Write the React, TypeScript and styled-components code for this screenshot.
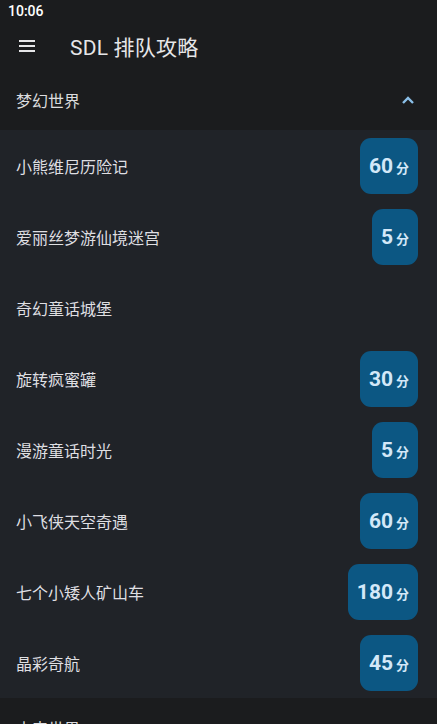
import styled, { createGlobalStyle } from "styled-components";
import { FC } from "react";

const GlobalStyle = createGlobalStyle`
  html, body {
    margin: 0;
    padding: 0;
    background: #1b1c1e;
  }
  body {
    font-family: Roboto, "Noto Sans CJK SC", sans-serif;
    color: #e2e2e4;
  }
`;

const Screen = styled.div`
  width: 437px;
  height: 724px;
  overflow: hidden;
  background: #1b1c1e;
  display: flex;
  flex-direction: column;

  & > * {
    flex-shrink: 0;
  }
`;

const StatusBar = styled.div`
  height: 22px;
  padding: 0 8px;
  display: flex;
  align-items: center;
  font-size: 14px;
  font-weight: 500;
  color: #ffffff;
`;

const AppBar = styled.header`
  height: 48px;
  display: flex;
  align-items: center;
  padding-left: 17px;
`;

const MenuIcon = styled.svg`
  width: 20px;
  height: 20px;
  margin-right: 33px;
`;

const Title = styled.h1`
  margin: 0;
  font-size: 21px;
  font-weight: 400;
  color: #e6e6e8;
  letter-spacing: 0.2px;
`;

const SectionHeader = styled.div`
  height: 60px;
  display: flex;
  align-items: center;
  justify-content: space-between;
  padding: 0 22px 0 16px;
  font-size: 16px;
  color: #dcdcdf;
`;

const List = styled.ul`
  margin: 0;
  padding: 0;
  list-style: none;
  background: #202328;
`;

const Row = styled.li`
  height: 71px;
  display: flex;
  align-items: center;
  justify-content: space-between;
  padding: 0 19px 0 16px;
  font-size: 16px;
  color: #dfdfe2;
`;

const Badge = styled.div`
  height: 56px;
  min-width: 44px;
  box-sizing: border-box;
  padding: 0 9px;
  border-radius: 11px;
  background: #0c5783;
  display: flex;
  align-items: center;
  justify-content: center;
  color: #d3e8f8;
  font-weight: 700;
`;

const Minutes = styled.span`
  font-size: 21px;
`;

const Unit = styled.span`
  font-size: 13px;
  margin-left: 3px;
  margin-top: 3px;
`;

const NextHeader = styled(SectionHeader)`
  height: 50px;
  align-items: flex-start;
  padding-top: 18px;
  box-sizing: border-box;
`;

const rides = [
  { name: "小熊维尼历险记", wait: 60 },
  { name: "爱丽丝梦游仙境迷宫", wait: 5 },
  { name: "奇幻童话城堡", wait: null },
  { name: "旋转疯蜜罐", wait: 30 },
  { name: "漫游童话时光", wait: 5 },
  { name: "小飞侠天空奇遇", wait: 60 },
  { name: "七个小矮人矿山车", wait: 180 },
  { name: "晶彩奇航", wait: 45 },
];

const WaitBadge: FC<{ wait: number }> = ({ wait }) => (
  <Badge>
    <Minutes>{wait}</Minutes>
    <Unit>分</Unit>
  </Badge>
);

const App: FC = () => {
  return (
    <>
      <GlobalStyle />
      <Screen>
        <StatusBar>10:06</StatusBar>
        <AppBar>
          <MenuIcon viewBox="0 0 20 20">
            <path d="M2 5h16M2 10h16M2 15h16" stroke="#e6e6e8" strokeWidth="2" />
          </MenuIcon>
          <Title>SDL 排队攻略</Title>
        </AppBar>
        <SectionHeader>
          <span>梦幻世界</span>
          <svg width="14" height="10" viewBox="0 0 14 10">
            <path d="M2 8l5-5 5 5" stroke="#8bbfe8" strokeWidth="2.4" fill="none" />
          </svg>
        </SectionHeader>
        <List>
          {rides.map((item, index) => (
            <Row key={index}>
              <span>{item.name}</span>
              {item.wait !== null && <WaitBadge wait={item.wait} />}
            </Row>
          ))}
        </List>
        <NextHeader>
          <span>未来世界</span>
        </NextHeader>
      </Screen>
    </>
  );
};

export default App;
